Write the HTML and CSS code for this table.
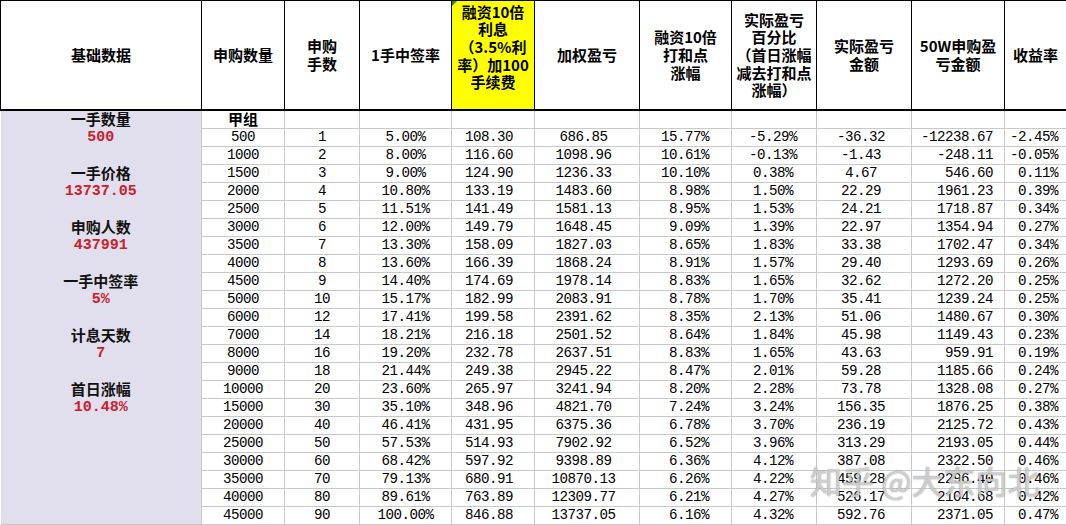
FILE: index.html
```html
<!DOCTYPE html>
<html lang="zh-CN">
<head>
<meta charset="utf-8">
<title>打新收益表</title>
<link rel="stylesheet" href="styles.css">
</head>
<body>
<table class="sheet">
  <colgroup>
    <col class="w-basis"><col class="w-qty"><col class="w-lots"><col class="w-rate"><col class="w-int">
    <col class="w-pnl"><col class="w-be"><col class="w-pct"><col class="w-amt"><col class="w-50w"><col class="w-yield">
  </colgroup>
  <thead>
    <tr class="head">
      <th>基础数据</th>
      <th>申购数量</th>
      <th>申购<br>手数</th>
      <th>1手中签率</th>
      <th class="hl">融资10倍<br>利息<br>（3.5%利<br>率）加100<br>手续费</th>
      <th>加权盈亏</th>
      <th>融资10倍<br>打和点<br>涨幅</th>
      <th>实际盈亏<br>百分比<br>（首日涨幅<br>减去打和点<br>涨幅）</th>
      <th>实际盈亏<br>金额</th>
      <th>50W申购盈<br>亏金额</th>
      <th>收益率</th>
    </tr>
  </thead>
  <tbody>
    <tr>
      <td class="basis" rowspan="23">
        <div class="basis-list">
          <div class="lbl">一手数量</div><div class="val">500</div><div></div>
          <div class="lbl">一手价格</div><div class="val">13737.05</div><div></div>
          <div class="lbl">申购人数</div><div class="val">437991</div><div></div>
          <div class="lbl">一手中签率</div><div class="val">5%</div><div></div>
          <div class="lbl">计息天数</div><div class="val">7</div><div></div>
          <div class="lbl">首日涨幅</div><div class="val">10.48%</div><div></div>
        </div>
      </td>
      <td class="c2 grp">甲组</td><td></td><td></td><td></td><td></td><td></td><td></td><td></td><td></td><td></td>
    </tr>
    <tr><td class="c2">500</td><td class="c3">1</td><td class="c4">5.00%</td><td class="c5">108.30</td><td class="c6">686.85</td><td class="c7">15.77%</td><td class="c8">-5.29%</td><td class="c9">-36.32</td><td class="c10">-12238.67</td><td class="c11">-2.45%</td></tr>
    <tr><td class="c2">1000</td><td class="c3">2</td><td class="c4">8.00%</td><td class="c5">116.60</td><td class="c6">1098.96</td><td class="c7">10.61%</td><td class="c8">-0.13%</td><td class="c9">-1.43</td><td class="c10">-248.11</td><td class="c11">-0.05%</td></tr>
    <tr><td class="c2">1500</td><td class="c3">3</td><td class="c4">9.00%</td><td class="c5">124.90</td><td class="c6">1236.33</td><td class="c7">10.10%</td><td class="c8">0.38%</td><td class="c9">4.67</td><td class="c10">546.60</td><td class="c11">0.11%</td></tr>
    <tr><td class="c2">2000</td><td class="c3">4</td><td class="c4">10.80%</td><td class="c5">133.19</td><td class="c6">1483.60</td><td class="c7">8.98%</td><td class="c8">1.50%</td><td class="c9">22.29</td><td class="c10">1961.23</td><td class="c11">0.39%</td></tr>
    <tr><td class="c2">2500</td><td class="c3">5</td><td class="c4">11.51%</td><td class="c5">141.49</td><td class="c6">1581.13</td><td class="c7">8.95%</td><td class="c8">1.53%</td><td class="c9">24.21</td><td class="c10">1718.87</td><td class="c11">0.34%</td></tr>
    <tr><td class="c2">3000</td><td class="c3">6</td><td class="c4">12.00%</td><td class="c5">149.79</td><td class="c6">1648.45</td><td class="c7">9.09%</td><td class="c8">1.39%</td><td class="c9">22.97</td><td class="c10">1354.94</td><td class="c11">0.27%</td></tr>
    <tr><td class="c2">3500</td><td class="c3">7</td><td class="c4">13.30%</td><td class="c5">158.09</td><td class="c6">1827.03</td><td class="c7">8.65%</td><td class="c8">1.83%</td><td class="c9">33.38</td><td class="c10">1702.47</td><td class="c11">0.34%</td></tr>
    <tr><td class="c2">4000</td><td class="c3">8</td><td class="c4">13.60%</td><td class="c5">166.39</td><td class="c6">1868.24</td><td class="c7">8.91%</td><td class="c8">1.57%</td><td class="c9">29.40</td><td class="c10">1293.69</td><td class="c11">0.26%</td></tr>
    <tr><td class="c2">4500</td><td class="c3">9</td><td class="c4">14.40%</td><td class="c5">174.69</td><td class="c6">1978.14</td><td class="c7">8.83%</td><td class="c8">1.65%</td><td class="c9">32.62</td><td class="c10">1272.20</td><td class="c11">0.25%</td></tr>
    <tr><td class="c2">5000</td><td class="c3">10</td><td class="c4">15.17%</td><td class="c5">182.99</td><td class="c6">2083.91</td><td class="c7">8.78%</td><td class="c8">1.70%</td><td class="c9">35.41</td><td class="c10">1239.24</td><td class="c11">0.25%</td></tr>
    <tr><td class="c2">6000</td><td class="c3">12</td><td class="c4">17.41%</td><td class="c5">199.58</td><td class="c6">2391.62</td><td class="c7">8.35%</td><td class="c8">2.13%</td><td class="c9">51.06</td><td class="c10">1480.67</td><td class="c11">0.30%</td></tr>
    <tr><td class="c2">7000</td><td class="c3">14</td><td class="c4">18.21%</td><td class="c5">216.18</td><td class="c6">2501.52</td><td class="c7">8.64%</td><td class="c8">1.84%</td><td class="c9">45.98</td><td class="c10">1149.43</td><td class="c11">0.23%</td></tr>
    <tr><td class="c2">8000</td><td class="c3">16</td><td class="c4">19.20%</td><td class="c5">232.78</td><td class="c6">2637.51</td><td class="c7">8.83%</td><td class="c8">1.65%</td><td class="c9">43.63</td><td class="c10">959.91</td><td class="c11">0.19%</td></tr>
    <tr><td class="c2">9000</td><td class="c3">18</td><td class="c4">21.44%</td><td class="c5">249.38</td><td class="c6">2945.22</td><td class="c7">8.47%</td><td class="c8">2.01%</td><td class="c9">59.28</td><td class="c10">1185.66</td><td class="c11">0.24%</td></tr>
    <tr><td class="c2">10000</td><td class="c3">20</td><td class="c4">23.60%</td><td class="c5">265.97</td><td class="c6">3241.94</td><td class="c7">8.20%</td><td class="c8">2.28%</td><td class="c9">73.78</td><td class="c10">1328.08</td><td class="c11">0.27%</td></tr>
    <tr><td class="c2">15000</td><td class="c3">30</td><td class="c4">35.10%</td><td class="c5">348.96</td><td class="c6">4821.70</td><td class="c7">7.24%</td><td class="c8">3.24%</td><td class="c9">156.35</td><td class="c10">1876.25</td><td class="c11">0.38%</td></tr>
    <tr><td class="c2">20000</td><td class="c3">40</td><td class="c4">46.41%</td><td class="c5">431.95</td><td class="c6">6375.36</td><td class="c7">6.78%</td><td class="c8">3.70%</td><td class="c9">236.19</td><td class="c10">2125.72</td><td class="c11">0.43%</td></tr>
    <tr><td class="c2">25000</td><td class="c3">50</td><td class="c4">57.53%</td><td class="c5">514.93</td><td class="c6">7902.92</td><td class="c7">6.52%</td><td class="c8">3.96%</td><td class="c9">313.29</td><td class="c10">2193.05</td><td class="c11">0.44%</td></tr>
    <tr><td class="c2">30000</td><td class="c3">60</td><td class="c4">68.42%</td><td class="c5">597.92</td><td class="c6">9398.89</td><td class="c7">6.36%</td><td class="c8">4.12%</td><td class="c9">387.08</td><td class="c10">2322.50</td><td class="c11">0.46%</td></tr>
    <tr><td class="c2">35000</td><td class="c3">70</td><td class="c4">79.13%</td><td class="c5">680.91</td><td class="c6">10870.13</td><td class="c7">6.26%</td><td class="c8">4.22%</td><td class="c9">459.28</td><td class="c10">2296.40</td><td class="c11">0.46%</td></tr>
    <tr><td class="c2">40000</td><td class="c3">80</td><td class="c4">89.61%</td><td class="c5">763.89</td><td class="c6">12309.77</td><td class="c7">6.21%</td><td class="c8">4.27%</td><td class="c9">526.17</td><td class="c10">2104.68</td><td class="c11">0.42%</td></tr>
    <tr><td class="c2">45000</td><td class="c3">90</td><td class="c4">100.00%</td><td class="c5">846.88</td><td class="c6">13737.05</td><td class="c7">6.16%</td><td class="c8">4.32%</td><td class="c9">592.76</td><td class="c10">2371.05</td><td class="c11">0.47%</td></tr>
  </tbody>
</table>
<div class="watermark">知乎 @大东向北</div>
</body>
</html>
```

FILE: styles.css
```css
html, body {
  margin: 0;
  padding: 0;
  background: #ffffff;
}

.sheet {
  border-collapse: collapse;
  table-layout: fixed;
  width: 1066px;
  font-family: "Liberation Mono", "DejaVu Sans Mono", monospace;
  font-size: 14.2px;
  letter-spacing: -0.52px;
  color: #000;
}

.w-basis { width: 201px; }
.w-qty { width: 83px; }
.w-lots { width: 75px; }
.w-rate { width: 92px; }
.w-int { width: 83px; }
.w-pnl { width: 105px; }
.w-be { width: 92px; }
.w-pct { width: 85px; }
.w-amt { width: 95px; }
.w-50w { width: 93px; }
.w-yield { width: 62px; }

.head { height: 109px; }

.sheet th {
  border: 1px solid #000;
  border-bottom: 2px solid #000;
  padding: 0;
  font-family: "Noto Sans CJK SC", "Noto Sans", sans-serif;
  font-weight: 700;
  font-size: 15px;
  letter-spacing: 0;
  line-height: 17.6px;
  text-align: center;
  vertical-align: middle;
  white-space: nowrap;
  overflow: hidden;
}

.sheet th.hl {
  background: #ffff00;
  padding-bottom: 16px;
  position: relative;
}

.sheet th.hl::before {
  content: "";
  position: absolute;
  left: 0;
  top: 0;
  border-top: 5px solid #2e8b3a;
  border-right: 5px solid transparent;
}

.sheet tbody tr { height: 18px; }

.sheet td {
  border: 1px solid #c9c9c9;
  padding: 0;
  height: 17px;
  line-height: 16px;
  white-space: nowrap;
  overflow: visible;
}

.sheet td.basis {
  background: #e1dfed;
  vertical-align: top;
  border-left: none;
  border-bottom: 1px solid #c9c9c9;
  padding: 0;
  letter-spacing: 0;
}

.basis-list {
  display: grid;
  grid-auto-rows: 18px;
  align-items: center;
  text-align: center;
}

.lbl {
  font-family: "Noto Sans CJK SC", "Noto Sans", sans-serif;
  font-weight: 700;
  font-size: 15px;
  line-height: 18px;
  color: #111;
  margin-top: -2px;
}

.val {
  font-family: "Liberation Mono", monospace;
  font-weight: 700;
  font-size: 15px;
  line-height: 18px;
  color: #c8202c;
}

.grp {
  font-family: "Noto Sans CJK SC", "Noto Sans", sans-serif;
  font-weight: 700;
  font-size: 15px;
  letter-spacing: 0;
}

.c2, .c3, .c4 { text-align: center; }
.c5 { text-align: center; padding-right: 8px !important; }
.c6 { text-align: center; padding-right: 7px !important; }
.c7 { text-align: right; padding-right: 22px !important; }
.c8 { text-align: center; padding-right: 2px !important; }
.c9 { text-align: center; padding-right: 6px !important; }
.c10 { text-align: right; padding-right: 11px !important; }
.c11 { text-align: right; padding-right: 8px !important; }

.watermark {
  position: absolute;
  left: 810px;
  top: 460px;
  font-family: "Noto Sans CJK SC", "Noto Sans", sans-serif;
  font-size: 32px;
  line-height: 40px;
  color: rgba(255, 255, 255, 0.62);
  text-shadow: 0 0 1px rgba(90, 90, 90, 0.7), 0 0 2px rgba(90, 90, 90, 0.3);
  white-space: nowrap;
  pointer-events: none;
}
```
